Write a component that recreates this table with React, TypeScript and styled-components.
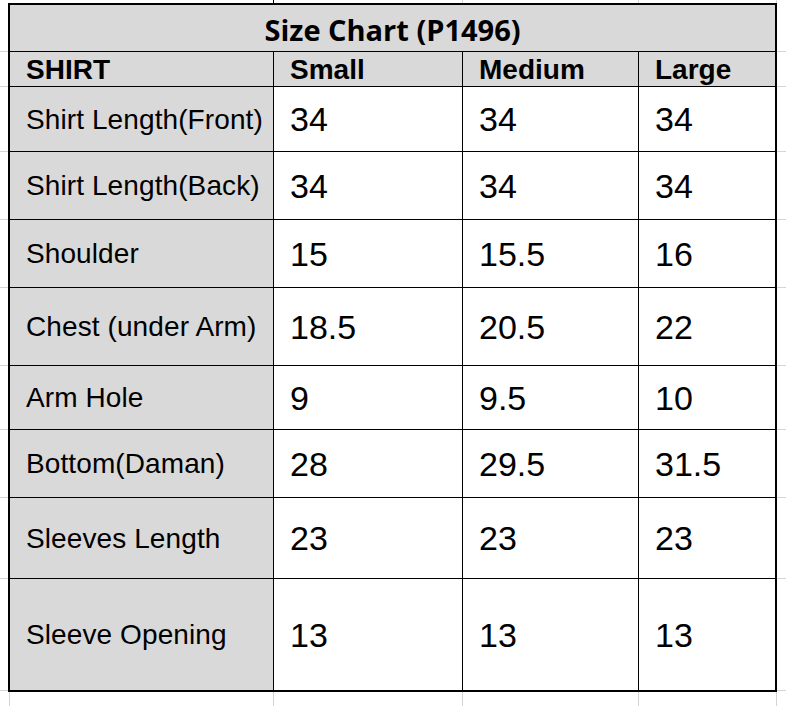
import { Fragment } from "react";
import styled, { createGlobalStyle } from "styled-components";

const GlobalStyle = createGlobalStyle`
  html, body {
    margin: 0;
    padding: 0;
    background: #ffffff;
  }
`;

const rowHeights = [46, 34, 64, 67, 67, 77, 63, 67, 80, 111];
const colWidths = [263, 188, 175, 136];

const sizes = ["Small", "Medium", "Large"];

const rows: { label: string; values: string[] }[] = [
  { label: "Shirt Length(Front)", values: ["34", "34", "34"] },
  { label: "Shirt Length(Back)", values: ["34", "34", "34"] },
  { label: "Shoulder", values: ["15", "15.5", "16"] },
  { label: "Chest (under Arm)", values: ["18.5", "20.5", "22"] },
  { label: "Arm Hole", values: ["9", "9.5", "10"] },
  { label: "Bottom(Daman)", values: ["28", "29.5", "31.5"] },
  { label: "Sleeves Length", values: ["23", "23", "23"] },
  { label: "Sleeve Opening", values: ["13", "13", "13"] },
];

const Sheet = styled.div`
  display: grid;
  grid-template-columns: 8px 769px 1fr;
  grid-template-rows: 3px 689px 1fr;
  width: 786px;
  height: 706px;
  overflow: hidden;
`;

const EdgeRow = styled.div`
  grid-column: 1 / -1;
  display: flex;
`;

const EdgeTick = styled.div<{ $w: number; $dark?: boolean }>`
  flex: 0 0 ${(p) => p.$w}px;
  border-right: 1px solid ${(p) => (p.$dark ? "#000000" : "#d4d4d4")};
`;

const Gutter = styled.div`
  display: flex;
  flex-direction: column;
  padding-top: 2px;
`;

const GutterTick = styled.div<{ $h: number }>`
  flex: 0 0 ${(p) => p.$h}px;
  border-bottom: 1px solid #d4d4d4;
`;

const Table = styled.div`
  display: grid;
  grid-template-columns: ${colWidths.map((w) => `${w}px`).join(" ")};
  grid-template-rows: ${rowHeights.map((h) => `${h}px`).join(" ")};
  gap: 1px;
  background: #000000;
  border: 2px solid #000000;
`;

const Cell = styled.div<{ $shade?: boolean }>`
  display: flex;
  align-items: center;
  padding: 1px 0 0 16px;
  background: ${(p) => (p.$shade ? "#d9d9d9" : "#ffffff")};
  color: #000000;
  font-family: "Liberation Sans", Arial, sans-serif;
  white-space: nowrap;
  overflow: hidden;
`;

const Title = styled(Cell)`
  grid-column: 1 / -1;
  justify-content: center;
  padding: 3px 0 0;
  font-family: "Open Sans", "Noto Sans", sans-serif;
  font-weight: 700;
  font-size: 29px;
`;

const Head = styled(Cell)`
  font-weight: 700;
  font-size: 28px;
`;

const Label = styled(Cell)`
  font-size: 28px;
  letter-spacing: 0.1px;
`;

const Value = styled(Cell)`
  font-size: 34px;
`;

export default function App() {
  return (
    <>
      <GlobalStyle />
      <Sheet>
        <EdgeRow>
          <EdgeTick $w={273} $dark />
          <EdgeTick $w={188} />
          <EdgeTick $w={175} />
          <EdgeTick $w={137} />
        </EdgeRow>
        <Gutter>
          {rowHeights.map((h, i) => (
            <GutterTick key={i} $h={h} />
          ))}
        </Gutter>
        <Table>
          <Title $shade>Size Chart (P1496)</Title>
          <Head $shade>SHIRT</Head>
          {sizes.map((s) => (
            <Head key={s} $shade>
              {s}
            </Head>
          ))}
          {rows.map((r) => (
            <Fragment key={r.label}>
              <Label $shade>{r.label}</Label>
              {r.values.map((v, i) => (
                <Value key={i}>{v}</Value>
              ))}
            </Fragment>
          ))}
        </Table>
        <Gutter>
          {rowHeights.map((h, i) => (
            <GutterTick key={i} $h={h} />
          ))}
        </Gutter>
        <EdgeRow>
          <EdgeTick $w={9} />
          <EdgeTick $w={263} />
          <EdgeTick $w={188} />
          <EdgeTick $w={175} />
          <EdgeTick $w={137} />
        </EdgeRow>
      </Sheet>
    </>
  );
}
